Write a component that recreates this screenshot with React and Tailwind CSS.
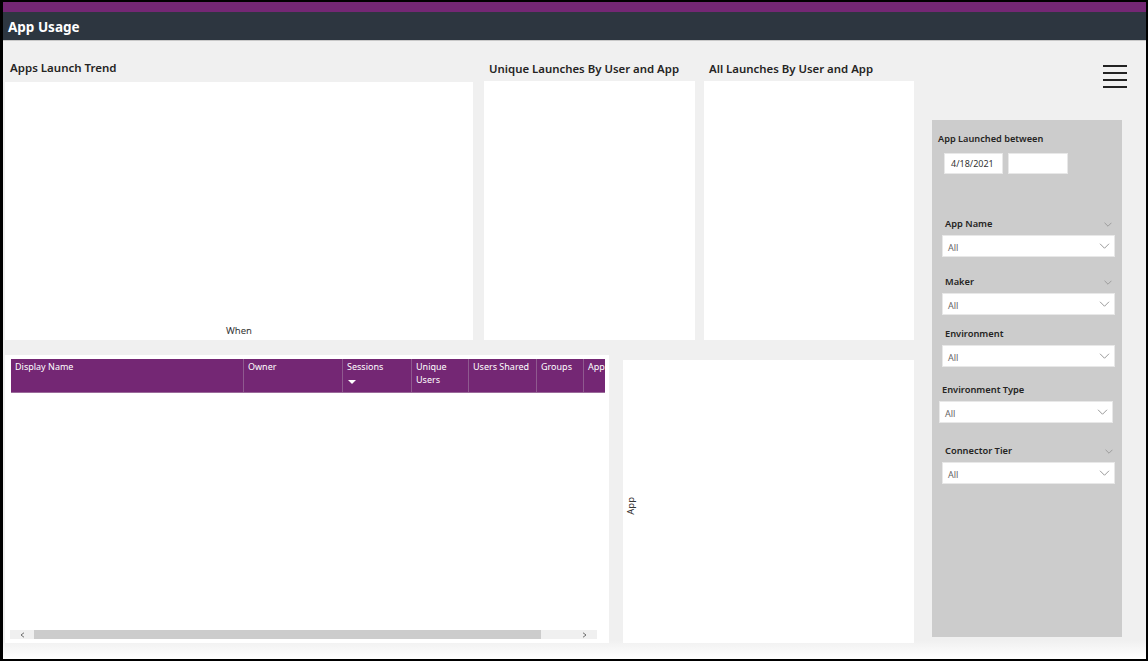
const FONT = "font-['Noto_Sans','Open_Sans',sans-serif]";

function Chevron({ className }) {
  return (
    <svg viewBox="0 0 14 8" className={className} fill="none" stroke="currentColor" strokeWidth="1">
      <path d="M1 1l6 6 6-6" />
    </svg>
  );
}

function Slicer({ label, chevron, labelClass, boxClass }) {
  return (
    <div className="flex flex-col">
      <div className={`flex items-center justify-between h-[16px] mb-[3px] text-[9.3px] font-semibold text-[#252423] ${labelClass}`}>
        <span>{label}</span>
        {chevron && <Chevron className="w-[8px] h-[5px] text-[#777] mr-[2px]" />}
      </div>
      <div className={`flex items-center justify-between h-[22px] bg-white border border-[#e8e8e8] text-[9px] text-[#666] ${boxClass}`}>
        <span className="pt-[3px]">All</span>
        <Chevron className="w-[11px] h-[6px] text-[#777]" />
      </div>
    </div>
  );
}

const columns = [
  ["Display Name", "w-[232px]"],
  ["Owner", "w-[99px]"],
  ["Sessions", "w-[69px]", true],
  ["Unique Users", "w-[57px]"],
  ["Users Shared", "w-[68px]"],
  ["Groups", "w-[47px]"],
  ["App", "w-[22px]"],
];

export default function App() {
  return (
    <div className={`w-[1148px] h-[661px] flex flex-col overflow-hidden border-black border-t-[2px] border-l-[3px] border-r-[2px] border-b-[2px] ${FONT}`}>
      <header className="shrink-0 bg-[#2d3640]">
        <div className="h-[10px] bg-[#742774]" />
        <div className="h-[28px] flex items-center pl-[5px] pt-[2px] text-[13.5px] font-bold text-white">App Usage</div>
      </header>
      <div className="h-px shrink-0 bg-[#c8c8c8]" />
      <main className="flex-1 flex bg-gradient-to-b from-[#f0f0f0] from-[97%] to-white">
        <div className="w-[911px] shrink-0 pl-[2px] flex flex-col">
          <div className="h-[299px] flex items-end">
            <section className="w-[468px] flex flex-col">
              <h2 className="h-[29px] pl-[5px] pt-[6px] text-[11.5px] font-semibold text-[#252423]">Apps Launch Trend</h2>
              <div className="h-[258px] bg-white flex flex-col items-center justify-end pb-[2px] text-[9.5px] text-[#333]">
                <span>When</span>
              </div>
            </section>
            <section className="w-[211px] ml-[11px] flex flex-col">
              <h2 className="h-[29px] pl-[5px] pt-[8px] text-[11.4px] font-semibold text-[#252423] whitespace-nowrap">Unique Launches By User and App</h2>
              <div className="h-[259px] bg-white" />
            </section>
            <section className="w-[210px] ml-[9px] flex flex-col">
              <h2 className="h-[29px] pl-[5px] pt-[8px] text-[11.4px] font-semibold text-[#252423] whitespace-nowrap">All Launches By User and App</h2>
              <div className="h-[259px] bg-white" />
            </section>
          </div>
          <div className="flex items-start mt-[15px]">
            <section className="w-[604px] h-[288px] bg-white pl-[6px] pr-[4px] pt-[4px] flex flex-col">
              <div className="h-[34px] flex bg-[#742774] border-b border-[#9a6a9a] text-[9px] leading-[13px] text-white overflow-hidden">
                {columns.map(([name, w, sorted], i) => (
                  <div key={name} className={`${w} shrink-0 pl-[4px] pt-[1px] overflow-hidden ${i > 0 ? "border-l border-[#8f5a8f]" : ""}`}>
                    <div className={i === 6 ? "whitespace-nowrap" : ""}>{name}</div>
                    {sorted && <div className="w-0 h-0 mt-[7px] ml-px border-l-[4px] border-r-[4px] border-t-[4px] border-l-transparent border-r-transparent border-t-white" />}
                  </div>
                ))}
              </div>
              <div className="mt-[237px] mr-[8px] -ml-px h-[9px] flex bg-[#f0f0f0]">
                <div className="w-[24px] flex items-center justify-center text-[#444]">
                  <svg viewBox="0 0 6 8" className="w-[5px] h-[6px]" fill="none" stroke="currentColor"><path d="M5 1L1 4l4 3" /></svg>
                </div>
                <div className="w-[507px] bg-[#cccccc]" />
                <div className="flex-1 flex items-center justify-end pr-[10px] text-[#444]">
                  <svg viewBox="0 0 6 8" className="w-[5px] h-[6px]" fill="none" stroke="currentColor"><path d="M1 1l4 3-4 3" /></svg>
                </div>
              </div>
            </section>
            <section className="w-[291px] h-[283px] ml-[14px] mt-[5px] bg-white flex items-center">
              <span className="ml-[1px] mt-[8px] text-[9.5px] text-[#333] [writing-mode:vertical-rl] rotate-180">App</span>
            </section>
          </div>
        </div>
        <aside className="flex flex-col ml-[18px]">
          <div className="h-[79px] flex justify-end">
            <svg viewBox="0 0 24 23" className="w-[24px] h-[23px] mt-[24px] -mr-[5px] text-[#222]" fill="currentColor">
              <rect x="0" y="0" width="24" height="2" />
              <rect x="0" y="7" width="24" height="2" />
              <rect x="0" y="14" width="24" height="2" />
              <rect x="0" y="21" width="24" height="2" />
            </svg>
          </div>
          <div className="w-[190px] h-[517px] bg-[#cccccc] flex flex-col">
            <div className="pl-[6px] pt-[12px] h-[33px] text-[9.2px] font-semibold text-[#252423]">App Launched between</div>
            <div className="flex pl-[12px] gap-[5px]">
              <div className="w-[59px] h-[21px] bg-white border border-[#e8e8e8] text-[9px] text-[#333] flex items-center pl-[6px]">4/18/2021</div>
              <div className="w-[60px] h-[21px] bg-white border border-[#e8e8e8]" />
            </div>
            <div className="mt-[42px] flex flex-col">
              <Slicer label="App Name" chevron labelClass="pl-[13px] pr-[8px]" boxClass="ml-[10px] mr-[7px] pl-[5px] pr-[4px]" />
            </div>
            <div className="mt-[17px] flex flex-col">
              <Slicer label="Maker" chevron labelClass="pl-[13px] pr-[8px]" boxClass="ml-[10px] mr-[7px] pl-[5px] pr-[4px]" />
            </div>
            <div className="mt-[11px] flex flex-col">
              <Slicer label="Environment" labelClass="pl-[13px]" boxClass="ml-[10px] mr-[7px] pl-[5px] pr-[4px]" />
            </div>
            <div className="mt-[15px] flex flex-col">
              <Slicer label="Environment Type" labelClass="pl-[10px]" boxClass="ml-[7px] mr-[9px] pl-[5px] pr-[4px] text-[#555]" />
            </div>
            <div className="mt-[20px] flex flex-col">
              <Slicer label="Connector Tier" chevron labelClass="pl-[13px] pr-[7px]" boxClass="ml-[10px] mr-[7px] pl-[5px] pr-[4px]" />
            </div>
          </div>
        </aside>
      </main>
    </div>
  );
}
